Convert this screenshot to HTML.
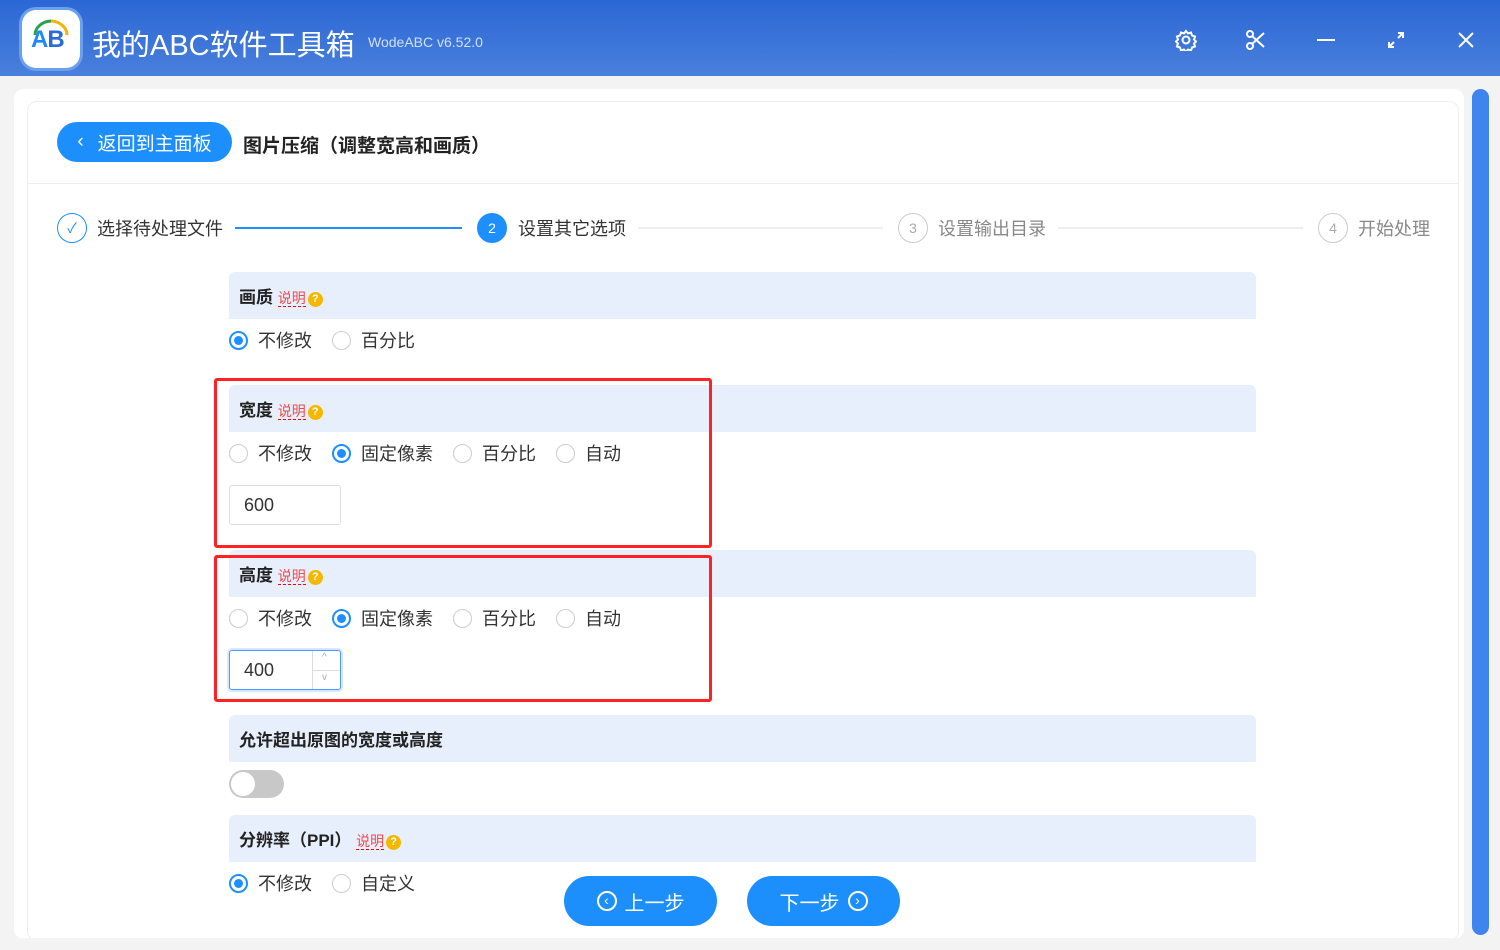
<!DOCTYPE html>
<html><head><meta charset="utf-8"><style>
*{margin:0;padding:0;box-sizing:border-box}
body{width:1500px;height:950px;overflow:hidden;background:#f3f3f3;font-family:"Liberation Sans","Noto Sans CJK SC",sans-serif;position:relative;color:#333}
.a{position:absolute}
.title{left:0;top:0;width:1500px;height:76px;background:linear-gradient(180deg,#2b67d5,#4a80dc)}
.band{position:absolute;left:229px;width:1027px;height:47px;background:#e8effc;border-radius:6px 6px 0 0}
.band b{position:absolute;left:10px;top:11px;font-size:17px;color:#222}
.sm{color:#f04a4a;font-size:14px;border-bottom:1px dashed #f00;font-weight:normal}
.q{display:inline-block;width:15px;height:15px;border-radius:50%;background:#f5b700;color:#fff;font-size:11px;text-align:center;line-height:15px;vertical-align:1px;margin-left:2px}
.r{position:absolute;font-size:18px;color:#333;white-space:nowrap}
.rd{display:inline-block;width:19px;height:19px;border-radius:50%;border:1px solid #ccc;vertical-align:-3px;margin-right:10px;position:relative}
.rd.on{border:2px solid #1e8fff}
.rd.on:after{content:"";position:absolute;left:3px;top:3px;width:9px;height:9px;border-radius:50%;background:#1e8fff}
.box{position:absolute;border:3px solid #f22;border-radius:3px}
.btn{position:absolute;height:50px;border-radius:25px;background:#1c8ffd;color:#fff;font-size:20px;display:flex;align-items:center;justify-content:center;gap:8px}
.circ{display:inline-block;width:20px;height:20px;border:2px solid #fff;border-radius:50%;font-size:14px;line-height:15px;text-align:center}
.step{position:absolute;top:213px;width:30px;height:30px;border-radius:50%;border:1px solid #ccc;color:#aaa;text-align:center;line-height:28px;font-size:14px}
.st{position:absolute;top:215px;font-size:18px}
</style></head><body>
<div class="a title"></div>
<div class="a" style="left:22px;top:10px;width:58px;height:58px;border-radius:14px;background:#fff;box-shadow:0 0 0 3px #6aa0ee"></div>
<div class="a" style="left:31px;top:26px;font-size:24px;font-weight:bold;letter-spacing:-1px"><span style="color:#1e88ff">A</span><span style="color:#2a6bd9">B</span></div>
<svg class="a" style="left:30px;top:17px" width="42" height="20"><path d="M5 18 A17 14 0 0 1 21 4" stroke="#2aa14a" stroke-width="3" fill="none"/><path d="M21 4 A17 14 0 0 1 37 18" stroke="#f4b400" stroke-width="3" fill="none"/></svg>
<div class="a" style="left:92px;top:22px;font-size:29px;color:#fff">我的ABC软件工具箱</div>
<div class="a" style="left:368px;top:34px;font-size:14px;color:#cfe0fa">WodeABC v6.52.0</div>
<svg class="a" style="left:1175px;top:29px" width="22" height="22" fill="none" stroke="#fff" stroke-width="2"><circle cx="11" cy="11" r="3.5"/><path d="M11 2l2 2.5 3-1 1 3 3 1-1 3 2 2-2 2 1 3-3 1-1 3-3-1-2 2.5-2-2.5-3 1-1-3-3-1 1-3-2-2 2-2-1-3 3-1 1-3 3 1z"/></svg>
<svg class="a" style="left:1245px;top:29px" width="22" height="22" fill="none" stroke="#fff" stroke-width="2"><circle cx="5" cy="5" r="3"/><circle cx="5" cy="17" r="3"/><path d="M7 7L19 18M7 15L19 4"/></svg>
<div class="a" style="left:1317px;top:39px;width:18px;height:2px;background:#fff"></div>
<svg class="a" style="left:1387px;top:31px" width="18" height="18" stroke="#fff" stroke-width="2" fill="none"><path d="M2 16L7 11M16 2L11 7M2 11v5h5M16 7V2h-5"/></svg>
<svg class="a" style="left:1457px;top:31px" width="18" height="18" stroke="#fff" stroke-width="2"><path d="M2 2L16 16M16 2L2 16"/></svg>
<div class="a" style="left:14px;top:89px;width:1450px;height:850px;background:#fff;border-radius:10px"></div>
<div class="a" style="left:27px;top:101px;width:1432px;height:840px;border:1px solid #eee;border-radius:10px"></div>
<div class="a" style="left:27px;top:183px;width:1432px;height:1px;background:#eee"></div>
<div class="a" style="left:1472px;top:89px;width:17px;height:846px;background:#3f84ef;border-radius:9px"></div>
<div class="a" style="left:0;top:938px;width:1500px;height:12px;background:#f3f3f3"></div>
<div class="btn" style="left:57px;top:122px;width:175px;height:40px;font-size:19px;border-radius:20px;gap:14px"><span>‹</span><span>返回到主面板</span></div>
<div class="a" style="left:243px;top:131px;font-size:19px;font-weight:bold;color:#222">图片压缩（调整宽高和画质）</div>
<div class="step" style="left:57px;border-color:#1e8fff;color:#1e8fff">✓</div>
<div class="st" style="left:97px">选择待处理文件</div>
<div class="a" style="left:235px;top:227px;width:227px;height:2px;background:#1e8fff"></div>
<div class="step" style="left:477px;background:#1e8fff;border-color:#1e8fff;color:#fff">2</div>
<div class="st" style="left:518px">设置其它选项</div>
<div class="a" style="left:638px;top:227px;width:245px;height:2px;background:#eee"></div>
<div class="step" style="left:898px">3</div>
<div class="st" style="left:938px;color:#888">设置输出目录</div>
<div class="a" style="left:1058px;top:227px;width:245px;height:2px;background:#eee"></div>
<div class="step" style="left:1318px">4</div>
<div class="st" style="left:1358px;color:#888">开始处理</div>

<div class="band" style="top:272px"><b>画质 <span class="sm">说明</span><span class="q">?</span></b></div>
<div class="r" style="left:229px;top:327px"><span class="rd on"></span>不修改&nbsp;&nbsp;&nbsp;&nbsp;<span class="rd"></span>百分比</div>

<div class="band" style="top:385px"><b>宽度 <span class="sm">说明</span><span class="q">?</span></b></div>
<div class="r" style="left:229px;top:440px"><span class="rd"></span>不修改&nbsp;&nbsp;&nbsp;&nbsp;<span class="rd on"></span>固定像素&nbsp;&nbsp;&nbsp;&nbsp;<span class="rd"></span>百分比&nbsp;&nbsp;&nbsp;&nbsp;<span class="rd"></span>自动</div>
<div class="a" style="left:229px;top:485px;width:112px;height:40px;border:1px solid #ddd;border-radius:3px;font-size:18px;padding:9px 14px">600</div>
<div class="box" style="left:214px;top:378px;width:498px;height:170px"></div>

<div class="band" style="top:550px"><b>高度 <span class="sm">说明</span><span class="q">?</span></b></div>
<div class="r" style="left:229px;top:605px"><span class="rd"></span>不修改&nbsp;&nbsp;&nbsp;&nbsp;<span class="rd on"></span>固定像素&nbsp;&nbsp;&nbsp;&nbsp;<span class="rd"></span>百分比&nbsp;&nbsp;&nbsp;&nbsp;<span class="rd"></span>自动</div>
<div class="a" style="left:229px;top:650px;width:112px;height:40px;border:1px solid #4a9bff;border-radius:3px;font-size:18px;padding:9px 14px;box-shadow:0 0 0 2px #d6e8ff">400</div>
<div class="a" style="left:312px;top:651px;width:1px;height:38px;background:#ddd"></div>
<div class="a" style="left:313px;top:670px;width:27px;height:1px;background:#ddd"></div>
<div class="a" style="left:322px;top:652px;font-size:10px;color:#aaa">^</div>
<div class="a" style="left:322px;top:672px;font-size:10px;color:#aaa">v</div>
<div class="box" style="left:214px;top:555px;width:498px;height:147px"></div>

<div class="band" style="top:715px"><b>允许超出原图的宽度或高度</b></div>
<div class="a" style="left:229px;top:770px;width:55px;height:28px;border-radius:14px;background:#c8c8c8"></div>
<div class="a" style="left:231px;top:772px;width:24px;height:24px;border-radius:50%;background:#fff"></div>

<div class="band" style="top:815px"><b>分辨率（PPI） <span class="sm">说明</span><span class="q">?</span></b></div>
<div class="r" style="left:229px;top:870px"><span class="rd on"></span>不修改&nbsp;&nbsp;&nbsp;&nbsp;<span class="rd"></span>自定义</div>

<div class="btn" style="left:564px;top:876px;width:153px"><span class="circ">‹</span><span>上一步</span></div>
<div class="btn" style="left:747px;top:876px;width:153px"><span>下一步</span><span class="circ">›</span></div>
</body></html>
